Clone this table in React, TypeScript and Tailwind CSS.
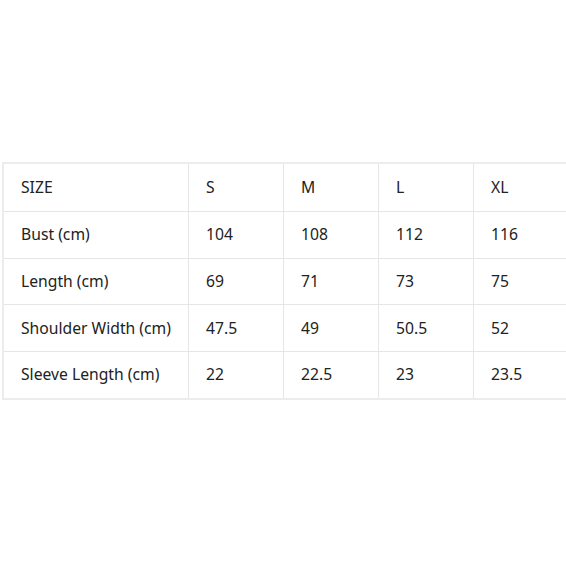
import React from "react";

const rows = [
  ["SIZE", "S", "M", "L", "XL"],
  ["Bust (cm)", "104", "108", "112", "116"],
  ["Length (cm)", "69", "71", "73", "75"],
  ["Shoulder Width (cm)", "47.5", "49", "50.5", "52"],
  ["Sleeve Length (cm)", "22", "22.5", "23", "23.5"],
];

export default function App() {
  return (
    <div className="w-[566px] h-[566px] bg-white overflow-hidden" style={{ fontFamily: '"Noto Sans", "Open Sans", sans-serif' }}>
      <div className="pt-[162px] pl-[2px]">
        <div className="w-[568px] border-t-[2px] border-b-[2px] border-l-[2px] border-[#ececec]">
          {rows.map((r, i) => (
            <div key={i} className={`flex h-[46.8px] ${i > 0 ? "border-t border-[#e6e6e6]" : ""}`}>
              {r.map((c, j) => (
                <div
                  key={j}
                  className={`flex items-center pl-[17px] text-[15.7px] text-[#222] ${j === 0 ? "w-[184px]" : "w-[95px] border-l border-[#e6e6e6]"}`}
                >
                  {c}
                </div>
              ))}
            </div>
          ))}
        </div>
      </div>
    </div>
  );
}
